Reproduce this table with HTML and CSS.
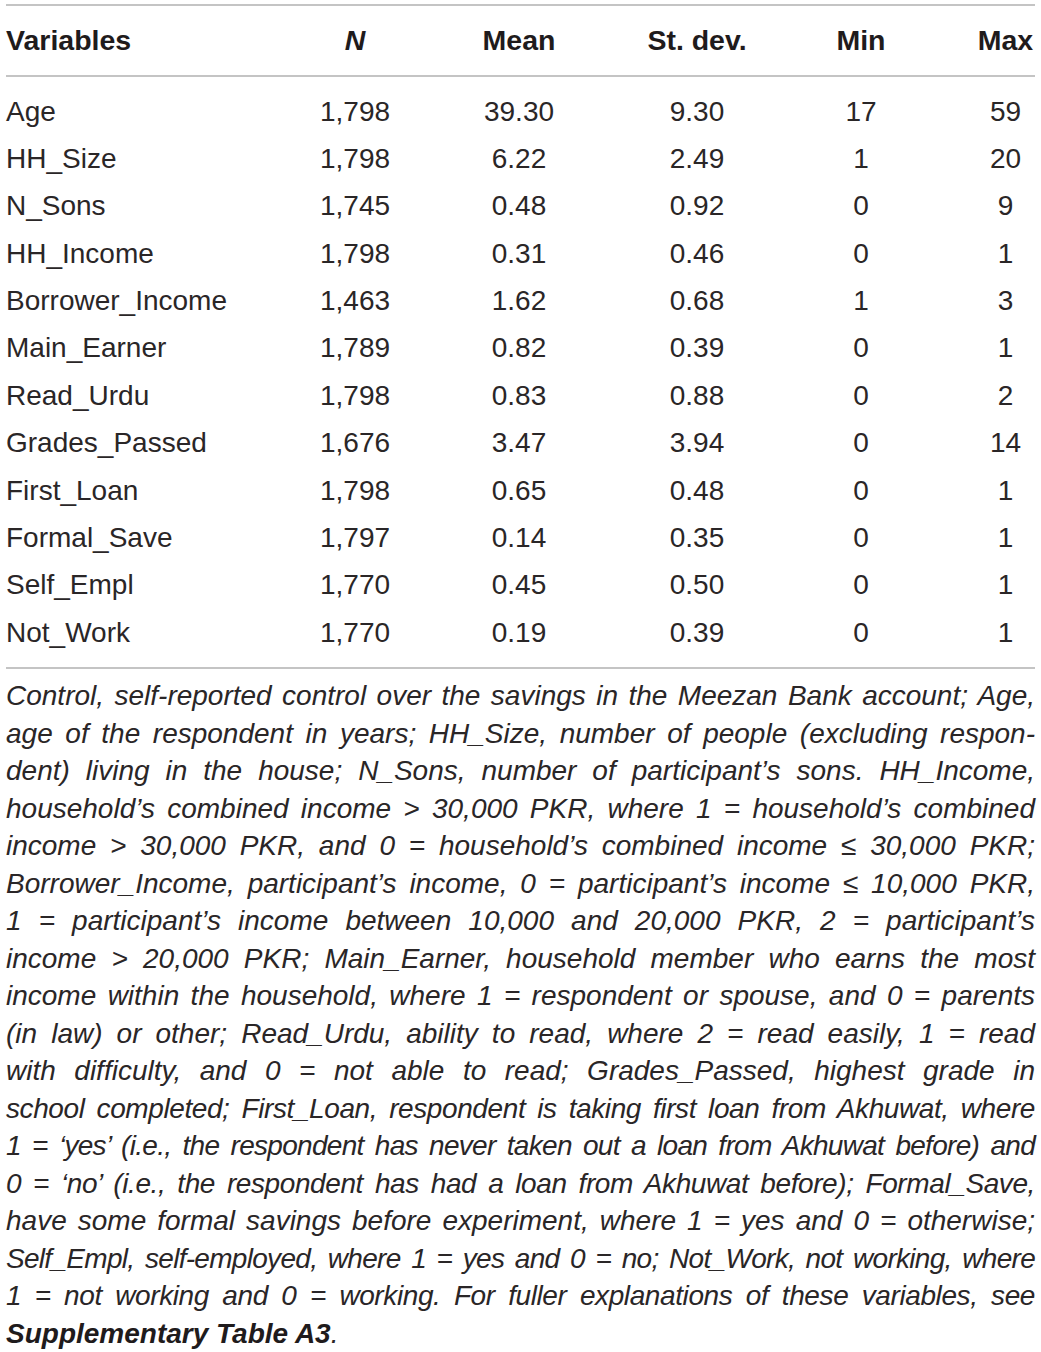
FILE: index.html
```html
<!DOCTYPE html>
<html lang="en">
<head>
    <meta charset="UTF-8">
    <title>Descriptive statistics</title>
    <link rel="stylesheet" href="styles.css">
</head>
<body>
    <div class="table-wrap">
        <table class="stats">
            <colgroup>
                <col class="c-var">
                <col class="c-n">
                <col class="c-mean">
                <col class="c-sd">
                <col class="c-min">
                <col class="c-max">
            </colgroup>
            <thead>
                <tr>
                    <th class="var">Variables</th>
                    <th><i>N</i></th>
                    <th>Mean</th>
                    <th>St. dev.</th>
                    <th class="min">Min</th>
                    <th>Max</th>
                </tr>
            </thead>
            <tbody>
                <tr><td class="var">Age</td><td>1,798</td><td>39.30</td><td>9.30</td><td class="min">17</td><td>59</td></tr>
                <tr><td class="var">HH_Size</td><td>1,798</td><td>6.22</td><td>2.49</td><td class="min">1</td><td>20</td></tr>
                <tr><td class="var">N_Sons</td><td>1,745</td><td>0.48</td><td>0.92</td><td class="min">0</td><td>9</td></tr>
                <tr><td class="var">HH_Income</td><td>1,798</td><td>0.31</td><td>0.46</td><td class="min">0</td><td>1</td></tr>
                <tr><td class="var">Borrower_Income</td><td>1,463</td><td>1.62</td><td>0.68</td><td class="min">1</td><td>3</td></tr>
                <tr><td class="var">Main_Earner</td><td>1,789</td><td>0.82</td><td>0.39</td><td class="min">0</td><td>1</td></tr>
                <tr><td class="var">Read_Urdu</td><td>1,798</td><td>0.83</td><td>0.88</td><td class="min">0</td><td>2</td></tr>
                <tr><td class="var">Grades_Passed</td><td>1,676</td><td>3.47</td><td>3.94</td><td class="min">0</td><td>14</td></tr>
                <tr><td class="var">First_Loan</td><td>1,798</td><td>0.65</td><td>0.48</td><td class="min">0</td><td>1</td></tr>
                <tr><td class="var">Formal_Save</td><td>1,797</td><td>0.14</td><td>0.35</td><td class="min">0</td><td>1</td></tr>
                <tr><td class="var">Self_Empl</td><td>1,770</td><td>0.45</td><td>0.50</td><td class="min">0</td><td>1</td></tr>
                <tr><td class="var">Not_Work</td><td>1,770</td><td>0.19</td><td>0.39</td><td class="min">0</td><td>1</td></tr>
            </tbody>
        </table>

        <p class="note">
            <span class="ln">Control, self-reported control over the savings in the Meezan Bank account; Age,</span>
            <span class="ln">age of the respondent in years; HH_Size, number of people (excluding respon-</span>
            <span class="ln">dent) living in the house; N_Sons, number of participant’s sons. HH_Income,</span>
            <span class="ln">household’s combined income &gt; 30,000 PKR, where 1 = household’s combined</span>
            <span class="ln">income &gt; 30,000 PKR, and 0 = household’s combined income ≤ 30,000 PKR;</span>
            <span class="ln">Borrower_Income, participant’s income, 0 = participant’s income ≤ 10,000 PKR,</span>
            <span class="ln">1 = participant’s income between 10,000 and 20,000 PKR, 2 = participant’s</span>
            <span class="ln">income &gt; 20,000 PKR; Main_Earner, household member who earns the most</span>
            <span class="ln">income within the household, where 1 = respondent or spouse, and 0 = parents</span>
            <span class="ln">(in law) or other; Read_Urdu, ability to read, where 2 = read easily, 1 = read</span>
            <span class="ln">with difficulty, and 0 = not able to read; Grades_Passed, highest grade in</span>
            <span class="ln tight">school completed; First_Loan, respondent is taking first loan from Akhuwat, where</span>
            <span class="ln tighter">1 = ‘yes’ (i.e., the respondent has never taken out a loan from Akhuwat before) and</span>
            <span class="ln tight">0 = ‘no’ (i.e., the respondent has had a loan from Akhuwat before); Formal_Save,</span>
            <span class="ln">have some formal savings before experiment, where 1 = yes and 0 = otherwise;</span>
            <span class="ln tighter">Self_Empl, self-employed, where 1 = yes and 0 = no; Not_Work, not working, where</span>
            <span class="ln tight">1 = not working and 0 = working. For fuller explanations of these variables, see</span>
            <span class="ln last"><b>Supplementary Table A3</b>.</span>
        </p>
    </div>
</body>
</html>
```

FILE: styles.css
```css
body {
    margin: 0;
    background-color: #ffffff;
    color: #2a2627;
    font-family: "Liberation Sans", Arial, sans-serif;
}

.table-wrap {
    width: 1029px;
    padding: 4px 6px 0 6px;
}

.stats {
    width: 100%;
    border-collapse: collapse;
    table-layout: fixed;
    font-size: 28px;
}

.c-var { width: 264px; }
.c-n { width: 170px; }
.c-mean { width: 158px; }
.c-sd { width: 198px; }
.c-min { width: 180px; }
.c-max { width: 59px; }

.stats thead tr {
    border-top: 2px solid #c4c4c4;
    border-bottom: 2px solid #c4c4c4;
}

.stats th {
    height: 69px;
    padding: 0;
    font-size: 28.5px;
    font-weight: bold;
    text-align: center;
    color: #1f1b1c;
}

.stats td {
    height: 47.36px;
    padding: 0;
    text-align: center;
    font-weight: normal;
}

.stats th.var,
.stats td.var {
    text-align: left;
}

.stats .min {
    padding-right: 50px;
}

.stats tbody tr:first-child td {
    padding-top: 11px;
}

.stats tbody tr:last-child td {
    padding-bottom: 11px;
}

.stats tbody tr:last-child {
    border-bottom: 2px solid #c4c4c4;
}

.note {
    margin: 8px 0 0 0;
    font-size: 28px;
    line-height: 37.5px;
    font-style: italic;
}

.ln {
    display: block;
    white-space: nowrap;
    text-align: justify;
    text-align-last: justify;
}

.ln.tight {
    letter-spacing: -0.4px;
}

.ln.tighter {
    letter-spacing: -0.7px;
}

.ln.last {
    text-align-last: left;
}

.ln.last b {
    color: #1f1b1c;
}
```
